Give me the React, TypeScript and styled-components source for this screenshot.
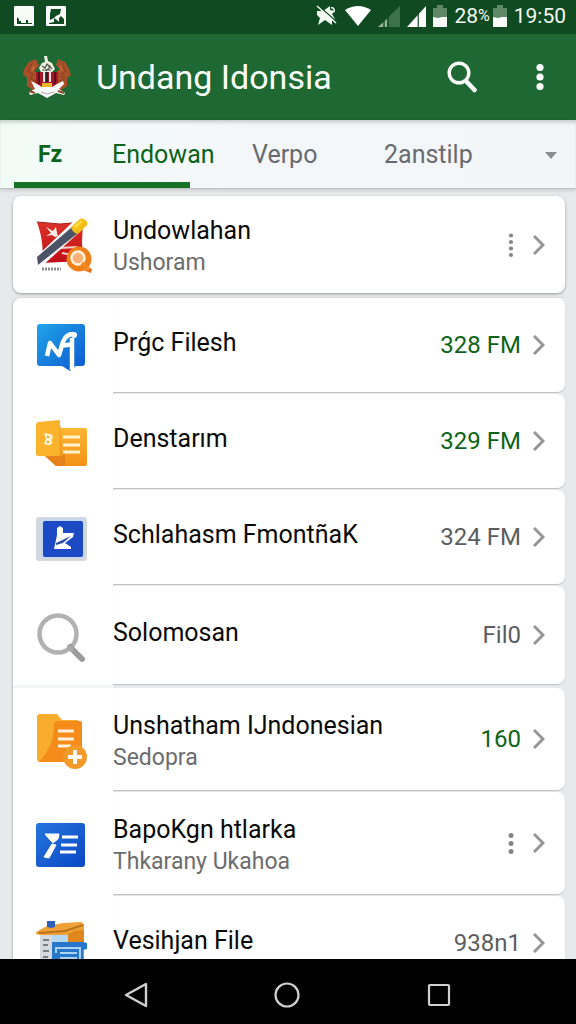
import React from 'react';
import styled, { createGlobalStyle } from 'styled-components';

const GlobalStyle = createGlobalStyle`
  * { box-sizing: border-box; }
  body { margin: 0; background: #000; font-family: Roboto, "Noto Sans", sans-serif; }
  button { border: 0; padding: 0; background: none; font: inherit; color: inherit; cursor: pointer; }
  a { color: inherit; text-decoration: none; }
  svg { display: block; flex: none; }
`;

const Screen = styled.div`
  display: flex;
  flex-direction: column;
  height: 100vh;
  overflow: hidden;
  background: #e7e9ea;
`;

const StatusBar = styled.div`
  display: flex;
  align-items: center;
  flex: none;
  height: 34px;
  padding: 0 10px 2px 14px;
  background: #104a20;
  color: #f3f8f3;
  font-size: 21px;
  line-height: 24px;
`;

const StatusGroup = styled.div<{ $gap: number }>`
  display: flex;
  align-items: center;
  gap: ${(p) => p.$gap}px;
`;

const StatusEnd = styled(StatusGroup)`
  margin-left: auto;
`;

const Percent = styled.span`
  display: flex;
  align-items: center;
  small { font-size: 16px; }
`;

const AppBar = styled.header`
  display: flex;
  align-items: center;
  flex: none;
  height: 86px;
  padding: 0 24px 0 22px;
  background: #1e6933;
  color: #fafdfa;
`;

const AppTitle = styled.h1`
  flex: 1;
  margin: 0 0 0 24px;
  font-size: 34px;
  line-height: 40px;
  font-weight: 400;
  white-space: nowrap;
`;

const BarActions = styled.div`
  display: flex;
  align-items: center;
  gap: 51px;
`;

const IconButton = styled.button<{ $width: number }>`
  display: flex;
  align-items: center;
  justify-content: center;
  flex: none;
  width: ${(p) => p.$width}px;
  height: 40px;
`;

const TabBar = styled.nav`
  flex: none;
  height: 69px;
  background: linear-gradient(90deg, #f2fcf7 0, #f4f7f9 40%, #f3f5f7 100%);
  border-bottom: 1px solid #bfc2c4;
  box-shadow: 0 1px 4px rgba(0, 0, 0, 0.16), inset 0 4px 4px -2px rgba(0, 0, 0, 0.2);
`;

const Tabs = styled.div`
  display: grid;
  grid-template-columns: 74fr 140fr 132fr 142fr 50px;
  align-items: center;
  height: 62px;
  padding: 8px 0 0 38px;
`;

const Tab = styled.button<{ $active?: boolean }>`
  height: 40px;
  text-align: left;
  font-size: 25px;
  line-height: 32px;
  color: ${(p) => (p.$active ? '#0b6219' : '#686b6e')};
`;

const ShortTab = styled(Tab)`
  font-size: 23px;
  font-weight: 700;
`;

const Indicator = styled.div`
  width: 176px;
  height: 6px;
  margin-left: 14px;
  background: #187226;
`;

const Main = styled.main`
  flex: 1;
  min-height: 0;
  overflow: hidden;
  padding: 7px 11px 0 13px;
`;

const Card = styled.section`
  display: flex;
  height: 97px;
  margin-bottom: 5px;
  border-radius: 8px;
  background: #fff;
  box-shadow: 0 1px 3px rgba(0, 0, 0, 0.35);
`;

const List = styled.ul`
  margin: 0;
  padding: 0;
  list-style: none;
  border-radius: 8px 0 0 0;
  box-shadow: -1px 0 2px rgba(0, 0, 0, 0.18);
`;

const Row = styled.li<{ $height: number }>`
  display: flex;
  min-height: ${(p) => p.$height}px;
  &:first-child > :first-child { border-top-left-radius: 8px; }
`;

const Lead = styled.div<{ $last?: boolean }>`
  display: flex;
  align-items: center;
  flex: none;
  width: 100px;
  padding: 2px 0 0 23px;
  background: #fff;
  border-bottom: ${(p) => (p.$last ? '3px solid #f3f4f4' : '0')};
`;

const CardLead = styled(Lead)`
  background: none;
`;

const Content = styled.div<{ $gap: number }>`
  display: flex;
  align-items: center;
  gap: 12px;
  flex: 1;
  min-width: 0;
  margin-bottom: ${(p) => p.$gap}px;
  padding-right: 20px;
  background: #fff;
  border-radius: 0 8px 8px 0;
  box-shadow: 0 1px 1px rgba(0, 0, 0, 0.18);
`;

const CardContent = styled(Content)`
  background: none;
  box-shadow: none;
`;

const Labels = styled.a<{ $double?: boolean }>`
  flex: 1;
  min-width: 0;
  padding: ${(p) => (p.$double ? '5px 0 0' : '0 0 5px')};
  white-space: nowrap;
`;

const Title = styled.span`
  display: block;
  font-size: 25px;
  line-height: 32px;
  color: #0a0a0a;
`;

const Subtitle = styled.span`
  display: block;
  font-size: 23px;
  line-height: 32px;
  color: #6b6c6d;
`;

const Value = styled.span<{ $green?: boolean }>`
  font-size: 24px;
  line-height: 32px;
  white-space: nowrap;
  color: ${(p) => (p.$green ? '#0d6418' : '#5c5d5f')};
`;

const NavBar = styled.nav`
  display: grid;
  grid-template-columns: repeat(3, 1fr);
  align-items: center;
  justify-items: center;
  flex: none;
  height: 65px;
  padding: 6px 61px 0 60px;
  background: #000;
`;

const Emblem = () => (
  <svg width="50" height="46" viewBox="0 0 50 46" aria-hidden="true">
    <path d="M14 5 7 8 2 15 1 21l4 2v9l9 6 5-11-3-8-4-2 5-5zM36 5l7 3 4 7 2 6-4 3v8l-9 6-6-10 4-10 4-3-4-4z" fill="#a9502a" />
    <path d="M10 9l-4 8 5 3-3 5 6 2-3 6M40 9l4 8-5 3 4 5-6 2 3 6" fill="none" stroke="#8b3d20" strokeWidth="1" />
    <path d="M12 12l-2 5M38 12l2 5" stroke="#c76a36" strokeWidth="2" />
    <path d="M22 2h3l1 5 4 2 3 6-3 3H19l-2-4 3-5 3-1z" fill="#f1efe3" />
    <path d="M20 12l3 2 2-4 3 3-4 4M27 11l3 4M20 16h9" stroke="#495145" strokeWidth="1.2" fill="none" />
    <path d="M14 18h22v10c0 5-5 9-11 10-6-1-11-5-11-10z" fill="#a6152a" />
    <path d="M17 18v12M33 18v12" stroke="#5a1015" strokeWidth="2" />
    <path d="M21 18h2v10h-2zM27 18h2v10h-2z" fill="#f3e5df" />
    <path d="M24 18h2v10h-2z" fill="#2f2320" />
    <path d="M20 29h10v5H20z" fill="#e7b82f" />
    <path d="M9 27l6 3 5 3h10l5-3 6-3 1 3-5 5 6 4-1 2-8-2-9 5-9-5-8 2-1-3 6-3z" fill="#fff" />
    <path d="M7 37l6 2M36 37l6 2" stroke="#90472a" strokeWidth="2" />
    <path d="M19 38l6 2 7-2" stroke="#aaa" fill="none" />
  </svg>
);

const PictureIcon = ({ filled = false }: { filled?: boolean }) => (
  <svg width="20" height="20" viewBox="0 0 20 20" aria-hidden="true">
    <rect width="20" height="20" rx="1" fill="#f8fbf8" />
    {filled ? (
      <path d="M5 3h10l-1 5-4 2-2 2-4 2V8zM3 18v-1l5-1v-4l3 2 2 2v-4l2-2 3 3v5z" fill="#104a20" />
    ) : (
      <path d="M3 17v-6l2 2v2h2v2h5v-3h2v3h4v1H3z" fill="#104a20" />
    )}
  </svg>
);

const MuteIcon = () => (
  <svg width="22" height="22" viewBox="0 0 22 22" aria-hidden="true">
    <path d="M1 6h6l7-5v4l5 1-3 3 3 5-3 1v5l-7-5-7 5 2-7-3-3z" fill="#f3f8f3" />
    <path d="M4 2l18 16" stroke="#104a20" strokeWidth="1.4" />
    <path d="M1 1l19 17" stroke="#f3f8f3" strokeWidth="1.5" />
    <path d="M15 3c2-1 4 1 3 4" stroke="#f3f8f3" strokeWidth="1.5" fill="none" />
  </svg>
);

const WifiIcon = () => (
  <svg width="26" height="20" viewBox="0 0 26 20" aria-hidden="true">
    <path d="M0 4Q13-4 26 4L13 20z" fill="#fff" />
  </svg>
);

const SignalIcon = ({ dim = false }: { dim?: boolean }) => (
  <svg width={dim ? 22 : 19} height="22" viewBox="0 0 22 22" preserveAspectRatio="none" aria-hidden="true">
    <path d="M0 22 22 1v21z" fill={dim ? '#3d7149' : '#fff'} />
    {dim && <path d="M0 22l9-8v8z" fill="#96b59b" />}
    <path d={dim ? 'M6 15v7M10 11v11' : 'M13 8v14'} stroke="#104a20" strokeWidth="1.4" />
  </svg>
);

const BatteryIcon = () => (
  <svg width="14" height="22" viewBox="0 0 14 22" aria-hidden="true">
    <path d="M4 0h6v3h4v19H0V3h4z" fill="#5f8867" />
    <path d="M0 12l5 1 4-1h5v10H0z" fill="#f8fbf8" />
  </svg>
);

const SearchIcon = () => (
  <svg width="30" height="32" viewBox="0 0 30 32" aria-hidden="true">
    <circle cx="12" cy="12" r="9.8" fill="none" stroke="#fafdfa" strokeWidth="3.4" />
    <path d="M19 20l8.500 9" stroke="#fafdfa" strokeWidth="4.600" strokeLinecap="round" />
  </svg>
);

const BarDots = () => (
  <svg width="8" height="28" viewBox="0 0 8 28" aria-hidden="true" fill="#fafdfa">
    <circle cx="4" cy="4.500" r="3.600" />
    <circle cx="4" cy="14" r="3.600" />
    <circle cx="4" cy="23.500" r="3.600" />
  </svg>
);

const RowDots = ({ count }: { count: number }) => (
  <svg width="6" height="26" viewBox="0 0 6 26" aria-hidden="true" fill="#858585">
    {Array.from({ length: count }, (_, i) => (
      <circle key={i} cx="3" cy={count === 4 ? 3.5 + i * 6.5 : 5.5 + i * 8} r={count === 4 ? 2.1 : 2.5} />
    ))}
  </svg>
);

const Chevron = () => (
  <svg width="12" height="20" viewBox="0 0 12 20" aria-hidden="true">
    <path d="M1 1l9 9-9 9" fill="none" stroke="#969696" strokeWidth="3" />
  </svg>
);

const Caret = () => (
  <svg width="12" height="7" viewBox="0 0 12 7" aria-hidden="true">
    <path d="M0 0h12L6 7z" fill="#8b8d8f" />
  </svg>
);

const FlagIcon = () => (
  <svg width="60" height="60" viewBox="0 0 60 60" aria-hidden="true">
    <defs>
      <linearGradient id="flag" x2="0" y2="1"><stop stopColor="#dc3328" /><stop offset="1" stopColor="#bf0d17" /></linearGradient>
    </defs>
    <path d="M1 6l23 2 23-2-1 20 1 19-21 1-20 1C8 29 5 18 1 6z" fill="url(#flag)" />
    <path d="M1 6l23 2 23-2" fill="none" stroke="#a3201b" />
    <path d="M10 11l7 4 3-4 1 6 1 3-3 1-3-2-6 1 5-3z" fill="#fff1e9" />
    <path d="M24 32l17-1M26 37l10 2" stroke="#f6cfc5" strokeWidth="2" />
    <path d="M0 41L40 3l10 7L4 52z" fill="#fff" />
    <path d="M1 41L36 11l6 6L2 49z" fill="#4c5367" />
    <path d="M35 11l9-8c3-2 9 3 7 6l-9 9c-4-1-6-3-7-7z" fill="#f4bd16" />
    <path d="M38 10l7-6 2 2-8 7z" fill="#fddc45" />
    <path d="M50 50l6 3-1 4-8-3z" fill="#df6d16" />
    <circle cx="43" cy="43" r="12.500" fill="#ef7f19" />
    <circle cx="42" cy="42" r="6.500" fill="#f9b377" stroke="#fff0df" strokeWidth="2.500" />
    <path d="M46 47l7 7" stroke="#f58a24" strokeWidth="4" />
    <path d="M6 53h19" stroke="#8d8d8d" strokeWidth="3" strokeDasharray="2 1" />
  </svg>
);

const ChatIcon = () => (
  <svg width="50" height="50" viewBox="0 0 50 50" aria-hidden="true">
    <defs>
      <linearGradient id="chat" x2="1" y2="1"><stop stopColor="#20a5ea" /><stop offset="1" stopColor="#0d58cf" /></linearGradient>
    </defs>
    <path d="M4 2h42a3 3 0 0 1 3 3v36a3 3 0 0 1-3 3H40l-6 5-8-5H4a3 3 0 0 1-3-3V5a3 3 0 0 1 3-3z" fill="url(#chat)" />
    <path d="M11 34l3-13 9 12 4-13c2-5 5-8 10-8M24 24l14-2M36 16v32" fill="none" stroke="#fff" strokeWidth="4.500" strokeLinejoin="round" />
    <circle cx="38" cy="13" r="3" fill="#fff" />
  </svg>
);

const SlidesIcon = () => (
  <svg width="52" height="50" viewBox="0 0 52 50" aria-hidden="true">
    <defs>
      <linearGradient id="slides" x2="0" y2="1"><stop stopColor="#fcb634" /><stop offset="1" stopColor="#f49216" /></linearGradient>
    </defs>
    <path d="M12 10h37a2 2 0 0 1 2 2v34a2 2 0 0 1-2 2H20L9 38z" fill="url(#slides)" />
    <path d="M9 38h16l4-3v13h-9z" fill="#e8821a" />
    <path d="M2 4l22-2v36H2a2 2 0 0 1-2-2V6z" fill="#fbb22d" />
    <path d="M24 8v32" stroke="#ec9821" />
    <path d="M8 15l6 1c4 1 3 5 1 6 3 2 0 6-3 5l-4-1 2-5z" fill="#fff4cf" />
    <path d="M12 18v2M12 23v2" stroke="#f0a22a" strokeWidth="2" />
    <path d="M27 19h17M27 27h17M27 34h17" stroke="#fff2cf" strokeWidth="3" />
  </svg>
);

const StampIcon = () => (
  <svg width="52" height="46" viewBox="0 0 52 46" aria-hidden="true">
    <rect x="0" y="1" width="51" height="44" rx="3" fill="#d3d7df" />
    <rect x="5" y="3" width="43" height="39" rx="2" fill="#c2d6f0" />
    <rect x="7" y="5" width="40" height="36" rx="2" fill="#1c49c4" />
    <path d="M21 12l3-2 3 2v5h11l-1 4-8 6 6 4v2H18l2-9 1-5z" fill="#fff" />
    <path d="M20 27l15-7-8 7-7 2z" fill="#2c4f9f" />
  </svg>
);

const LensIcon = () => (
  <svg width="50" height="52" viewBox="0 0 50 52" aria-hidden="true">
    <circle cx="22" cy="23" r="18.500" fill="none" stroke="#b1b1b1" strokeWidth="4.500" />
    <path d="M34 36l12 12" stroke="#9c9c9c" strokeWidth="6" strokeLinecap="round" />
    <path d="M32 35l5 5" stroke="#aaa" strokeWidth="4" />
  </svg>
);

const FolderIcon = () => (
  <svg width="52" height="56" viewBox="0 0 52 56" aria-hidden="true">
    <path d="M4 1h17l5 6h16v42H4a3 3 0 0 1-3-3V4a3 3 0 0 1 3-3z" fill="#f9ad2c" />
    <path d="M20 8h24a2 2 0 0 1 2 2v37l-3 2H3C14 37 18 27 18 10z" fill="#f48b1b" />
    <path d="M22 18h16M22 26h16M22 33h13" stroke="#fff2dc" strokeWidth="3" />
    <circle cx="39" cy="44" r="12" fill="#f39a28" />
    <path d="M39 37v14M32 44h14" stroke="#fff" strokeWidth="4" />
  </svg>
);

const ChecklistIcon = () => (
  <svg width="50" height="46" viewBox="0 0 50 46" aria-hidden="true">
    <defs>
      <linearGradient id="checklist" x2="1" y2="1"><stop stopColor="#2575df" /><stop offset="1" stopColor="#0b48c3" /></linearGradient>
    </defs>
    <rect x="0" y="1" width="49" height="44" rx="3" fill="url(#checklist)" />
    <path d="M9 12h14l-1 5-5 4-3-3zM16 22l4 1-7 13-5-1z" fill="#fff" stroke="#fff" strokeLinejoin="round" />
    <path d="M26 15h16M25 23h16M24 30h16" stroke="#fff" strokeWidth="3" />
  </svg>
);

const ClipboardIcon = () => (
  <svg width="54" height="56" viewBox="0 0 54 56" aria-hidden="true">
    <path d="M4 14l22 1 22-5v46H4z" fill="#d6dade" />
    <path d="M31 10h17v46H31z" fill="#df861c" />
    <path d="M16 17h16v20H16z" fill="#b8d7f0" />
    <path d="M0 15l11-6 16-3 18-1 3 2v6l-9 1-9 4H7c-4 0-8 0-7-3z" fill="#efa137" />
    <path d="M3 16l26-2 18-6" stroke="#bb721c" strokeWidth="2" fill="none" />
    <path d="M11 4h8v6l-4 1-4-1z" fill="#2b61ba" />
    <path d="M16 25h31l4 1v6l-4 1v23H16z" fill="#2676c9" />
    <path d="M20 36v-5h24v25M24 36h17M24 41h17" fill="none" stroke="#aad4f5" strokeWidth="2" />
    <path d="M7 23h6M7 28h5M7 34h6M7 40h5" stroke="#777f87" strokeWidth="2" />
  </svg>
);

type Item = {
  title: string;
  subtitle?: string;
  value?: string;
  green?: boolean;
  last?: boolean;
  icon: React.ReactNode;
};

const items: Item[] = [
  { title: 'Prǵc Filesh', value: '328 FM', green: true, icon: <ChatIcon /> },
  { title: 'Denstarım', value: '329 FM', green: true, icon: <SlidesIcon /> },
  { title: 'Schlahasm FmontñaK', value: '324 FM', icon: <StampIcon /> },
  { title: 'Solomosan', value: 'Fil0', last: true, icon: <LensIcon /> },
  { title: 'Unshatham IJndonesian', subtitle: 'Sedopra', value: '160', green: true, icon: <FolderIcon /> },
  { title: 'BapoKgn htlarka', subtitle: 'Thkarany Ukahoa', icon: <ChecklistIcon /> },
  { title: 'Vesihjan File', value: '938n1', icon: <ClipboardIcon /> },
];

const Trailing = ({ title, value, green, dots }: { title: string; value?: string; green?: boolean; dots: number }) => (
  <>
    {value ? (
      <Value $green={green}>{value}</Value>
    ) : (
      <IconButton $width={20} aria-label={`Options for ${title}`}><RowDots count={dots} /></IconButton>
    )}
    <IconButton $width={12} aria-label={`Open ${title}`}><Chevron /></IconButton>
  </>
);

export default function App() {
  return (
    <Screen>
      <GlobalStyle />
      <StatusBar>
        <StatusGroup $gap={12}>
          <PictureIcon />
          <PictureIcon filled />
        </StatusGroup>
        <StatusEnd $gap={7}>
          <MuteIcon />
          <WifiIcon />
          <SignalIcon dim />
          <SignalIcon />
          <BatteryIcon />
          <StatusGroup $gap={3}>
            <Percent>28<small>%</small></Percent>
            <BatteryIcon />
          </StatusGroup>
          <span>19:50</span>
        </StatusEnd>
      </StatusBar>
      <AppBar>
        <Emblem />
        <AppTitle>Undang Idonsia</AppTitle>
        <BarActions>
          <IconButton $width={30} aria-label="Search"><SearchIcon /></IconButton>
          <IconButton $width={24} aria-label="More options"><BarDots /></IconButton>
        </BarActions>
      </AppBar>
      <TabBar>
        <Tabs>
          <ShortTab $active>Fz</ShortTab>
          <Tab $active>Endowan</Tab>
          <Tab>Verpo</Tab>
          <Tab>2anstilp</Tab>
          <IconButton $width={50} aria-label="More tabs"><Caret /></IconButton>
        </Tabs>
        <Indicator />
      </TabBar>
      <Main>
        <Card>
          <CardLead><FlagIcon /></CardLead>
          <CardContent $gap={0}>
            <Labels href="#undowlahan" $double>
              <Title>Undowlahan</Title>
              <Subtitle>Ushoram</Subtitle>
            </Labels>
            <Trailing title="Undowlahan" dots={4} />
          </CardContent>
        </Card>
        <List>
          {items.map((item) => (
            <Row key={item.title} $height={item.subtitle ? 104 : item.last ? 102 : 96}>
              <Lead $last={item.last}>{item.icon}</Lead>
              <Content $gap={item.last ? 4 : 2}>
                <Labels href={`#${item.title.split(' ')[0].toLowerCase()}`} $double={Boolean(item.subtitle)}>
                  <Title>{item.title}</Title>
                  {item.subtitle && <Subtitle>{item.subtitle}</Subtitle>}
                </Labels>
                <Trailing title={item.title} value={item.value} green={item.green} dots={3} />
              </Content>
            </Row>
          ))}
        </List>
      </Main>
      <NavBar>
        <IconButton $width={48} aria-label="Back">
          <svg width="26" height="28" viewBox="0 0 26 28"><path d="M23 3v22L3 14z" fill="none" stroke="#d0d0d0" strokeWidth="2.400" strokeLinejoin="round" /></svg>
        </IconButton>
        <IconButton $width={48} aria-label="Home">
          <svg width="28" height="28" viewBox="0 0 28 28"><circle cx="14" cy="14" r="11.500" fill="none" stroke="#d0d0d0" strokeWidth="2.200" /></svg>
        </IconButton>
        <IconButton $width={48} aria-label="Recent apps">
          <svg width="26" height="26" viewBox="0 0 26 26"><rect x="3" y="3" width="20" height="20" rx="1" fill="none" stroke="#d0d0d0" strokeWidth="2.200" /></svg>
        </IconButton>
      </NavBar>
    </Screen>
  );
}
